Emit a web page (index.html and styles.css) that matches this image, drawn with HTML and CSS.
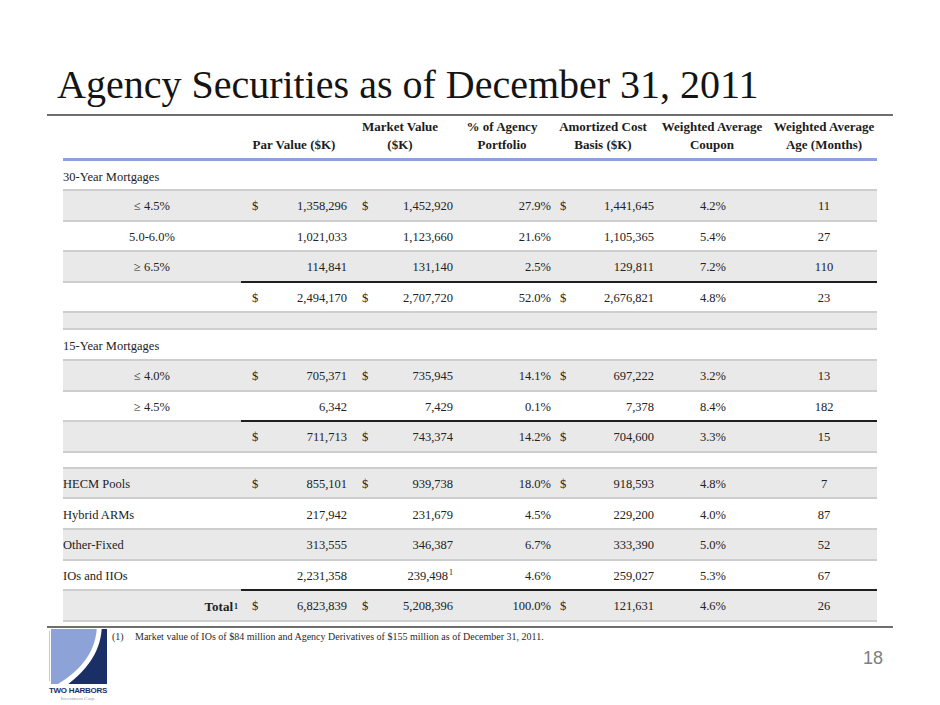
FILE: index.html
```html
<!DOCTYPE html>
<html>
<head>
<meta charset="utf-8">
<link rel="stylesheet" href="styles.css">
</head>
<body>
<div class="slide">
  <h1 class="title">Agency Securities as of December 31, 2011</h1>
  <div class="rule"></div>

  <div class="table">
    <div class="row head">
      <div class="c"></div>
      <div class="c h1">Par Value ($K)</div>
      <div class="c h2">Market Value<br>($K)</div>
      <div class="c h3">% of Agency<br>Portfolio</div>
      <div class="c h4">Amortized Cost<br>Basis ($K)</div>
      <div class="c h5">Weighted Average<br>Coupon</div>
      <div class="c h6">Weighted Average<br>Age (Months)</div>
    </div>

    <div class="row grp0"><div class="c lab">30-Year Mortgages</div></div>

    <div class="row g">
      <div class="c sub">≤ 4.5%</div>
      <div class="c m1"><span>$</span><span>1,358,296</span></div>
      <div class="c m2"><span>$</span><span>1,452,920</span></div>
      <div class="c pct">27.9%</div>
      <div class="c m4"><span>$</span><span>1,441,645</span></div>
      <div class="c cp">4.2%</div>
      <div class="c ag">11</div>
    </div>
    <div class="row">
      <div class="c sub">5.0-6.0%</div>
      <div class="c m1"><span></span><span>1,021,033</span></div>
      <div class="c m2"><span></span><span>1,123,660</span></div>
      <div class="c pct">21.6%</div>
      <div class="c m4"><span></span><span>1,105,365</span></div>
      <div class="c cp">5.4%</div>
      <div class="c ag">27</div>
    </div>
    <div class="row g">
      <div class="c sub">≥ 6.5%</div>
      <div class="c m1"><span></span><span>114,841</span></div>
      <div class="c m2"><span></span><span>131,140</span></div>
      <div class="c pct">2.5%</div>
      <div class="c m4"><span></span><span>129,811</span></div>
      <div class="c cp">7.2%</div>
      <div class="c ag">110</div>
    </div>
    <div class="row blk">
      <div class="c"></div>
      <div class="c m1"><span>$</span><span>2,494,170</span></div>
      <div class="c m2"><span>$</span><span>2,707,720</span></div>
      <div class="c pct">52.0%</div>
      <div class="c m4"><span>$</span><span>2,676,821</span></div>
      <div class="c cp">4.8%</div>
      <div class="c ag">23</div>
    </div>
    <div class="row g sp sp1"><div class="c"></div></div>

    <div class="row grp"><div class="c lab">15-Year Mortgages</div></div>
    <div class="row g">
      <div class="c sub">≤ 4.0%</div>
      <div class="c m1"><span>$</span><span>705,371</span></div>
      <div class="c m2"><span>$</span><span>735,945</span></div>
      <div class="c pct">14.1%</div>
      <div class="c m4"><span>$</span><span>697,222</span></div>
      <div class="c cp">3.2%</div>
      <div class="c ag">13</div>
    </div>
    <div class="row">
      <div class="c sub">≥ 4.5%</div>
      <div class="c m1"><span></span><span>6,342</span></div>
      <div class="c m2"><span></span><span>7,429</span></div>
      <div class="c pct">0.1%</div>
      <div class="c m4"><span></span><span>7,378</span></div>
      <div class="c cp">8.4%</div>
      <div class="c ag">182</div>
    </div>
    <div class="row g blk">
      <div class="c"></div>
      <div class="c m1"><span>$</span><span>711,713</span></div>
      <div class="c m2"><span>$</span><span>743,374</span></div>
      <div class="c pct">14.2%</div>
      <div class="c m4"><span>$</span><span>704,600</span></div>
      <div class="c cp">3.3%</div>
      <div class="c ag">15</div>
    </div>
    <div class="row sp sp2"><div class="c"></div></div>

    <div class="row g">
      <div class="c lab">HECM Pools</div>
      <div class="c m1"><span>$</span><span>855,101</span></div>
      <div class="c m2"><span>$</span><span>939,738</span></div>
      <div class="c pct">18.0%</div>
      <div class="c m4"><span>$</span><span>918,593</span></div>
      <div class="c cp">4.8%</div>
      <div class="c ag">7</div>
    </div>
    <div class="row">
      <div class="c lab">Hybrid ARMs</div>
      <div class="c m1"><span></span><span>217,942</span></div>
      <div class="c m2"><span></span><span>231,679</span></div>
      <div class="c pct">4.5%</div>
      <div class="c m4"><span></span><span>229,200</span></div>
      <div class="c cp">4.0%</div>
      <div class="c ag">87</div>
    </div>
    <div class="row g">
      <div class="c lab">Other-Fixed</div>
      <div class="c m1"><span></span><span>313,555</span></div>
      <div class="c m2"><span></span><span>346,387</span></div>
      <div class="c pct">6.7%</div>
      <div class="c m4"><span></span><span>333,390</span></div>
      <div class="c cp">5.0%</div>
      <div class="c ag">52</div>
    </div>
    <div class="row">
      <div class="c lab">IOs and IIOs</div>
      <div class="c m1"><span></span><span>2,231,358</span></div>
      <div class="c m2"><span></span><span>239,498<sup>1</sup></span></div>
      <div class="c pct">4.6%</div>
      <div class="c m4"><span></span><span>259,027</span></div>
      <div class="c cp">5.3%</div>
      <div class="c ag">67</div>
    </div>
    <div class="row g blk last">
      <div class="c tot">Total<sup>1</sup></div>
      <div class="c m1"><span>$</span><span>6,823,839</span></div>
      <div class="c m2"><span>$</span><span>5,208,396</span></div>
      <div class="c pct">100.0%</div>
      <div class="c m4"><span>$</span><span>121,631</span></div>
      <div class="c cp">4.6%</div>
      <div class="c ag">26</div>
    </div>
  </div>

  <div class="rule foot-rule"></div>

  <div class="footer">
    <div class="logo">
      <svg class="mark" width="58" height="55" viewBox="0 0 58 55">
        <rect x="0" y="2" width="1" height="50" fill="#c9cbd3"/>
        <path d="M2 0 H47.7 C46 25 30 42 9 55 H2 Z" fill="#8da2d6"/>
        <path d="M52.7 0 H58 V55 H19.3 C36 42 51 25 52.7 0 Z" fill="#1b2f67"/>
      </svg>
      <div class="brand">TWO HARBORS</div>
      <div class="brand-sub">Investment Corp.</div>
    </div>
    <p class="note"><span class="note-n">(1)</span>Market value of IOs of $84 million and Agency Derivatives of $155 million as of December 31, 2011.</p>
    <div class="page">18</div>
  </div>
</div>
</body>
</html>
```

FILE: styles.css
```css
html, body {
  margin: 0;
  padding: 0;
  background: #fff;
}
body {
  font-family: "Liberation Serif", "Times New Roman", serif;
  color: #222;
}
.slide {
  width: 940px;
  height: 705px;
  background: #fff;
  overflow: hidden;
}
.title {
  margin: 62px 0 0 57px;
  font-size: 40px;
  font-weight: normal;
  line-height: 46px;
  color: #141414;
  white-space: nowrap;
}
.rule {
  margin: 6px 0 0 47px;
  width: 846px;
  height: 2px;
  background: #6e6e6e;
}
.table {
  margin-left: 63px;
  width: 814px;
}
.row {
  display: grid;
  grid-template-columns: 178px 111px 106px 97px 105px 111px 106px;
}
.row.g {
  background: #e9e9e9;
}
.c {
  box-sizing: border-box;
  height: 30.6px;
  border-top: 2px solid #cecece;
  padding-top: 3px;
  display: flex;
  align-items: center;
  font-size: 12.5px;
  white-space: nowrap;
}
.head .c {
  height: 44.7px;
  border-top: none;
  border-bottom: 3px solid #8ba3dc;
  padding: 0 0 4px 0;
  flex-direction: column;
  justify-content: flex-end;
  align-items: center;
  text-align: center;
  font-size: 13px;
  font-weight: bold;
  line-height: 18px;
  color: #1c1c1c;
}
.head .h1 { padding-right: 5px; }
.head .h2 { padding-right: 10px; }
.head .h3 { padding-right: 9px; }
.head .h4 { padding-right: 9px; }
.head .h5 { padding-right: 7px; }

.grp0 .c {
  grid-column: 1 / -1;
  height: 28.3px;
  border-top: none;
  padding-top: 5px;
}
.grp .c {
  grid-column: 1 / -1;
}
.sp .c {
  grid-column: 1 / -1;
  padding: 0;
}
.sp1 .c { height: 17px; }
.sp2 .c { height: 16px; }

.blk .c:not(:first-child) {
  border-top-color: #1f1f1f;
}
.last .c {
  height: 32.6px;
  border-bottom: 2px solid #cecece;
}

.lab {
  justify-content: flex-start;
}
.sub {
  justify-content: center;
}
.tot {
  justify-content: flex-end;
  padding-right: 3px;
  font-weight: bold;
  font-size: 13px;
}
.m1, .m2, .m4 {
  justify-content: space-between;
}
.m1 { padding-left: 11px; padding-right: 5px; }
.m2 { padding-left: 10px; padding-right: 5px; }
.m4 { padding-left: 5px; padding-right: 6px; }
.pct {
  justify-content: flex-end;
  padding-right: 4px;
}
.cp {
  justify-content: center;
  padding-right: 5px;
}
.ag {
  justify-content: center;
}
sup {
  font-size: 8px;
  line-height: 0;
  vertical-align: 5px;
  margin-left: 1px;
}

.foot-rule {
  margin-top: 4px;
}
.footer {
  display: flex;
  align-items: flex-start;
  margin-top: 1px;
}
.logo {
  margin-left: 49px;
  width: 58px;
  display: flex;
  flex-direction: column;
  align-items: center;
}
.mark {
  display: block;
}
.brand {
  margin-top: 2px;
  font-family: "Liberation Sans", Arial, sans-serif;
  font-weight: bold;
  font-size: 8px;
  line-height: 9px;
  letter-spacing: -0.3px;
  color: #1b2f67;
  white-space: nowrap;
}
.brand-sub {
  font-family: "Liberation Serif", serif;
  font-size: 5px;
  line-height: 7px;
  color: #9a9a9a;
  white-space: nowrap;
}
.note {
  margin: 0 0 0 5px;
  padding-top: 2px;
  font-size: 10px;
  line-height: 12px;
  color: #2a2a2a;
  white-space: nowrap;
}
.note-n {
  display: inline-block;
  width: 23px;
}
.page {
  margin: 19.6px 57px 0 auto;
  font-family: "Liberation Sans", Arial, sans-serif;
  font-size: 18px;
  color: #7f7f7f;
}
```
